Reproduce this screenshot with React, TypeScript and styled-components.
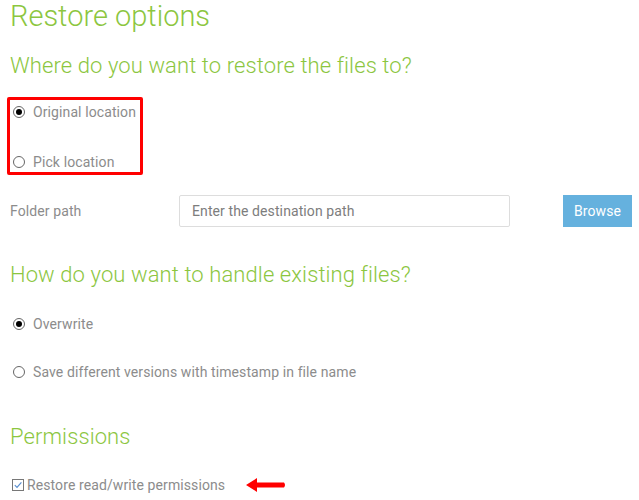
import React, { useState } from 'react'
import styled, { createGlobalStyle } from 'styled-components'

const GlobalStyle = createGlobalStyle`
  html, body {
    margin: 0;
    padding: 0;
    background: #ffffff;
  }
  body {
    font-family: Roboto, "Liberation Sans", sans-serif;
  }
`

const Page = styled.div`
  width: 639px;
  height: 500px;
  overflow: hidden;
  padding: 0 0 0 10px;
  box-sizing: border-box;
`

const Title = styled.h1`
  margin: 0;
  font-size: 29px;
  line-height: 32px;
  font-weight: 300;
  color: #8cc63f;
`

const Heading = styled.h2<{ $top: number }>`
  margin: ${(p) => p.$top}px 0 0 0;
  font-size: 22px;
  line-height: 26px;
  font-weight: 300;
  letter-spacing: 0.1px;
  color: #8cc63f;
`

const Highlight = styled.div`
  margin: 18px 0 0 -3px;
  width: 136px;
  height: 78px;
  border: 3px solid #ff0000;
  border-radius: 2px;
  box-sizing: border-box;
  display: flex;
  flex-direction: column;
  justify-content: space-between;
  padding: 2px 0 0 0;
`

const OptionList = styled.div`
  display: flex;
  flex-direction: column;
  gap: 28px;
  margin-top: 26px;
`

const Option = styled.label`
  display: flex;
  align-items: center;
  gap: 8px;
  font-size: 14px;
  line-height: 20px;
  letter-spacing: 0.1px;
  color: #8c8c8c;
  white-space: nowrap;
  padding-left: 3px;
`

const RadioRing = styled.span<{ $checked: boolean }>`
  width: 12px;
  height: 12px;
  border-radius: 50%;
  border: 1px solid #666;
  box-sizing: border-box;
  display: flex;
  align-items: center;
  justify-content: center;
  flex-shrink: 0;

  &::after {
    content: '';
    width: 6px;
    height: 6px;
    border-radius: 50%;
    background: #000;
    display: ${(p) => (p.$checked ? 'block' : 'none')};
  }
`

const FieldRow = styled.div`
  display: flex;
  align-items: center;
  margin-top: 20px;
`

const FieldLabel = styled.span`
  width: 169px;
  font-size: 14px;
  letter-spacing: 0.1px;
  color: #8c8c8c;
`

const PathInput = styled.input`
  width: 331px;
  height: 32px;
  box-sizing: border-box;
  border: 1px solid #dddddd;
  border-radius: 2px;
  padding: 0 12px;
  font-family: Roboto, "Liberation Sans", sans-serif;
  font-size: 14px;
  letter-spacing: 0.1px;
  color: #555;
  outline: none;

  &::placeholder {
    color: #7d7d7d;
  }
`

const BrowseButton = styled.button`
  margin-left: 53px;
  width: 69px;
  height: 32px;
  border: 0;
  background: #65b1de;
  color: #ffffff;
  font-family: Roboto, "Liberation Sans", sans-serif;
  font-size: 14px;
  letter-spacing: 0.1px;
`

const CheckRow = styled.div`
  display: flex;
  align-items: center;
  gap: 2px;
  margin-top: 27px;
  font-size: 14px;
  letter-spacing: 0.1px;
  color: #8c8c8c;
  padding-left: 2px;
`

const Arrow = styled.svg`
  margin-left: 18px;
`

const Radio = ({ label, checked }: { label: string; checked: boolean }) => (
  <Option>
    <RadioRing $checked={checked} />
    {label}
  </Option>
)

const CheckIcon = () => (
  <svg width="13" height="13" viewBox="0 0 13 13">
    <rect x="0.5" y="0.5" width="11" height="11" fill="#fff" stroke="#777" />
    <path d="M2.8 6.2 L5 8.4 L9.4 3.4" fill="none" stroke="#5a8fd0" strokeWidth="1.2" />
  </svg>
)

const App: React.FC = () => {
  const [path, setPath] = useState('')

  return (
    <Page>
      <GlobalStyle />
      <Title>Restore options</Title>
      <Heading $top={21}>Where do you want to restore the files to?</Heading>
      <Highlight>
        <Radio label="Original location" checked />
        <Radio label="Pick location" checked={false} />
      </Highlight>
      <FieldRow>
        <FieldLabel>Folder path</FieldLabel>
        <PathInput
          value={path}
          onChange={(e) => setPath(e.target.value)}
          placeholder="Enter the destination path"
        />
        <BrowseButton>Browse</BrowseButton>
      </FieldRow>
      <Heading $top={35}>How do you want to handle existing files?</Heading>
      <OptionList>
        <Radio label="Overwrite" checked />
        <Radio label="Save different versions with timestamp in file name" checked={false} />
      </OptionList>
      <Heading $top={42}>Permissions</Heading>
      <CheckRow>
        <CheckIcon />
        Restore read/write permissions
        <Arrow width="42" height="16" viewBox="0 0 42 16">
          <path d="M1 8 L12 1 L12 5.5 L39 5.5 Q41 8 39 10.5 L12 10.5 L12 15 Z" fill="#ff0000" />
        </Arrow>
      </CheckRow>
    </Page>
  )
}

export default App
